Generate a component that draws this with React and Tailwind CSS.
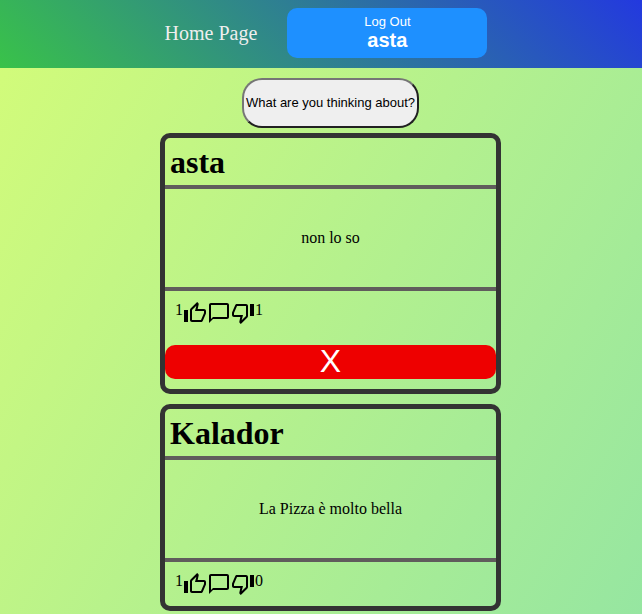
import React from "react";
import {
  MdOutlineThumbUp,
  MdOutlineThumbDown,
  MdOutlineChatBubbleOutline,
} from "react-icons/md";

const posts = [
  { id: 1, author: "asta", text: "non lo so", likes: 1, dislikes: 1, own: true },
  { id: 2, author: "Kalador", text: "La Pizza è molto bella", likes: 1, dislikes: 0, own: false },
];

function Header() {
  return (
    <header className="flex items-center justify-center gap-[30px] bg-[linear-gradient(45deg,#39c249,#2339df)] pt-2 pb-2.5 pl-2.5">
      <a href="#home" className="text-xl text-[#eeeeee]">
        Home Page
      </a>
      <button
        type="button"
        className="flex h-[50px] w-[200px] flex-col items-center justify-center rounded-[10px] bg-[#1e90ff] pb-0.5 font-['Liberation_Sans',Arial,sans-serif] text-white"
      >
        <span className="text-[13px] leading-4">Log Out</span>
        <strong className="text-xl leading-5 font-bold">asta</strong>
      </button>
    </header>
  );
}

function Post({ post }) {
  return (
    <article className="w-[341px] max-w-full rounded-[10px] border-[5px] border-[#333333]">
      <h1 className="border-b-4 border-[#605c5c] px-[5px] pt-1.5 pb-1 text-[32px] leading-[37px] font-bold">
        {post.author}
      </h1>
      <p className="flex h-[102px] items-center justify-center border-b-4 border-[#605c5c] text-base">
        {post.text}
      </p>
      <div className="flex p-2.5 text-base leading-[18px]">
        <span>{post.likes}</span>
        <button type="button" aria-label="Like">
          <MdOutlineThumbUp size={24} />
        </button>
        <button type="button" aria-label="Comment">
          <MdOutlineChatBubbleOutline size={24} />
        </button>
        <button type="button" aria-label="Dislike">
          <MdOutlineThumbDown size={24} />
        </button>
        <span>{post.dislikes}</span>
      </div>
      {post.own && (
        <button
          type="button"
          className="my-2.5 block w-full rounded-[10px] bg-[#ee0000] pb-0.5 font-['Liberation_Sans',Arial,sans-serif] text-[32px] leading-8 text-white"
        >
          X
        </button>
      )}
    </article>
  );
}

export default function App() {
  return (
    <div className="min-h-screen bg-[linear-gradient(120deg,#d4fc79,#96e6a1)] font-['Liberation_Serif','Times_New_Roman',serif] text-black">
      <Header />
      <main className="flex flex-col items-center pt-2.5 pl-[19px]">
        <button
          type="button"
          className="mb-[5px] h-[50px] w-[177px] rounded-[20px] border-2 border-[#767676] border-r-[#212121] border-b-[#212121] bg-[#efefef] font-['Liberation_Sans',Arial,sans-serif] text-[13px] whitespace-nowrap"
        >
          What are you thinking about?
        </button>
        <div className="flex max-w-full flex-col gap-2.5">
          {posts.map((post) => (
            <Post key={post.id} post={post} />
          ))}
        </div>
      </main>
    </div>
  );
}
